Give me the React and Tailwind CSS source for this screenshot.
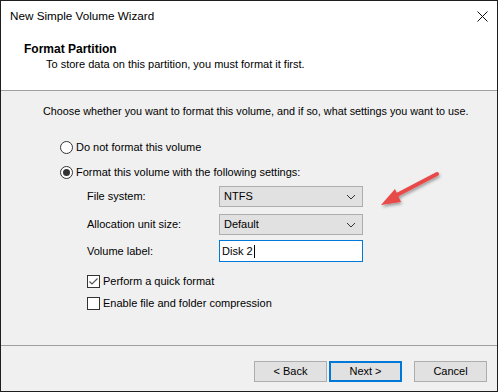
import React from "react";

const font = { fontFamily: '"Liberation Sans", Arial, sans-serif' };

function Chevron() {
  return (
    <svg width="10" height="6" viewBox="0 0 10 6" className="shrink-0">
      <path d="M1 1 L5 5 L9 1" fill="none" stroke="#333" strokeWidth="1" />
    </svg>
  );
}

function Combo({ value }) {
  return (
    <div className="w-[144px] h-[21px] bg-[#e1e1e1] border border-[#adadad] flex items-center justify-between pl-[4px] pr-[6px] text-[11px] text-black">
      <span>{value}</span>
      <Chevron />
    </div>
  );
}

function Radio({ checked, label }) {
  return (
    <div className="flex items-center h-[13px]">
      <div className="w-[13px] h-[13px] rounded-full border border-[#333] bg-white flex items-center justify-center">
        {checked && <div className="w-[7px] h-[7px] rounded-full bg-[#333]" />}
      </div>
      <span className="ml-[3px] text-[11px] text-black">{label}</span>
    </div>
  );
}

function Check({ checked, label }) {
  return (
    <div className="flex items-center h-[13px]">
      <div className="w-[13px] h-[13px] border border-[#333] bg-white flex items-center justify-center">
        {checked && (
          <svg width="11" height="11" viewBox="0 0 11 11">
            <path d="M1.5 5.5 L4 8 L9.5 2.5" fill="none" stroke="#555" strokeWidth="1.2" />
          </svg>
        )}
      </div>
      <span className="ml-[3px] text-[11px] text-black">{label}</span>
    </div>
  );
}

function Button({ children, primary }) {
  return (
    <div
      className={
        "w-[73px] h-[21px] bg-[#e1e1e1] flex items-center justify-center text-[11px] text-black " +
        (primary ? "border-2 border-[#0078d7]" : "border border-[#adadad]")
      }
    >
      {children}
    </div>
  );
}

export default function App() {
  return (
    <div
      className="relative w-[498px] h-[392px] border border-[#1e1e1e] bg-[#f0f0f0] flex flex-col overflow-hidden"
      style={font}
    >
      {/* Title bar + header */}
      <div className="bg-white h-[90px] border-b border-[#a0a0a0] flex flex-col shrink-0">
        <div className="h-[30px] flex items-center justify-between pl-[9px] pr-[9px]">
          <span className="text-[11.7px] text-black">New Simple Volume Wizard</span>
          <svg width="11" height="11" viewBox="0 0 11 11">
            <path d="M0.5 0.5 L10.5 10.5 M10.5 0.5 L0.5 10.5" stroke="#111" strokeWidth="1" />
          </svg>
        </div>
        <div className="pl-[23px] pt-[11px] flex flex-col">
          <span className="text-[12px] font-bold text-black leading-[14px]">Format Partition</span>
          <span className="pl-[22px] text-[11px] text-black leading-[14px] mt-[1px]">
            To store data on this partition, you must format it first.
          </span>
        </div>
      </div>

      {/* Body */}
      <div className="flex-1 flex flex-col pl-[42px] pt-[14px]">
        <span className="text-[10.8px] text-black leading-[13px]">
          Choose whether you want to format this volume, and if so, what settings you want to use.
        </span>
        <div className="pl-[17px] mt-[23px] flex flex-col gap-[12px]">
          <Radio label="Do not format this volume" />
          <Radio checked label="Format this volume with the following settings:" />
        </div>
        <div className="pl-[44px] mt-[7px] flex flex-col">
          <div className="flex items-center gap-0 h-[21px]">
            <span className="w-[132px] text-[11px] text-black">File system:</span>
            <Combo value="NTFS" />
          </div>
          <div className="flex items-center h-[21px] mt-[7px]">
            <span className="w-[132px] text-[11px] text-black">Allocation unit size:</span>
            <Combo value="Default" />
          </div>
          <div className="flex items-center h-[22px] mt-[5px]">
            <span className="w-[132px] text-[11px] text-black">Volume label:</span>
            <div className="w-[144px] h-[22px] bg-white border border-[#0078d7] flex items-center pl-[2px] text-[11px] text-black">
              Disk 2<span className="inline-block w-[1px] h-[13px] bg-black ml-[1px]" />
            </div>
          </div>
          <div className="mt-[13px] flex flex-col gap-[9px]">
            <Check checked label="Perform a quick format" />
            <Check label="Enable file and folder compression" />
          </div>
        </div>
      </div>

      {/* Footer */}
      <div className="h-[46px] border-t border-[#a0a0a0] shrink-0 flex items-start pt-[15px] pl-[253px]">
        <Button>&lt; Back</Button>
        <div className="ml-[2px]">
          <Button primary>Next &gt;</Button>
        </div>
        <div className="ml-[12px]">
          <Button>Cancel</Button>
        </div>
      </div>

      {/* Annotation arrow */}
      <svg className="absolute left-[370px] top-[163px] pointer-events-none" width="80" height="55" viewBox="0 0 80 55">
        <defs>
          <filter id="sh" x="-20%" y="-20%" width="140%" height="140%">
            <feDropShadow dx="1" dy="2" stdDeviation="1.5" floodColor="#000" floodOpacity="0.35" />
          </filter>
        </defs>
        <g filter="url(#sh)">
          <path d="M66 10 L22 33" stroke="#e8484a" strokeWidth="4" strokeLinecap="round" />
          <path d="M10 41 L24 25 L30 38 Z" fill="#e8484a" />
        </g>
      </svg>
    </div>
  );
}
